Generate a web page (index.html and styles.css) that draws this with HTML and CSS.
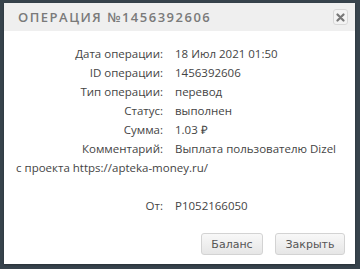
FILE: index.html
```html
<!DOCTYPE html>
<html>
<head>
<meta charset="utf-8">
<link rel="stylesheet" href="styles.css">
</head>
<body>
<div class="dialog">
  <div class="header">
    <span class="title">ОПЕРАЦИЯ №1456392606</span>
    <span class="close"><svg width="9" height="9" viewBox="0 0 9 9"><path d="M1.5 1.5 L7.5 7.5 M7.5 1.5 L1.5 7.5" stroke="#777" stroke-width="2.2" stroke-linecap="round"/></svg></span>
  </div>
  <div class="content">
    <div class="row"><span class="label">Дата операции:</span>18 Июл 2021 01:50</div>
    <div class="row"><span class="label">ID операции:</span>1456392606</div>
    <div class="row"><span class="label">Тип операции:</span>перевод</div>
    <div class="row"><span class="label">Статус:</span>выполнен</div>
    <div class="row"><span class="label">Сумма:</span>1.03 ₽</div>
    <div class="row"><span class="label">Комментарий:</span>Выплата пользователю Dizel</div>
    <div class="row">с проекта https://apteka-money.ru/</div>
    <div class="row empty"></div>
    <div class="row"><span class="label">От:</span>P1052166050</div>
  </div>
  <div class="footer">
    <button class="btn btn-balance">Баланс</button>
    <button class="btn btn-close">Закрыть</button>
  </div>
</div>
</body>
</html>
```
FILE: styles.css
```css
html, body {
  margin: 0;
  padding: 0;
  background: #37434c;
  width: 360px;
  height: 269px;
  overflow: hidden;
}
.dialog {
  margin: 3px 0 0 4px;
  width: 351px;
  height: 261px;
  background: #fff;
  display: flex;
  flex-direction: column;
  box-shadow: 0 1px 2px rgba(0,0,0,0.3);
  font-family: "Open Sans", sans-serif;
}
.header {
  height: 28px;
  background: #efefef;
  display: flex;
  align-items: center;
  justify-content: space-between;
  padding: 0 7px 0 14px;
}
.title {
  font-size: 13px;
  font-weight: 600;
  letter-spacing: 1.5px;
  color: #7a7a7a;
}
.close {
  width: 13px;
  height: 14px;
  border: 1px solid #d8d8d8;
  border-radius: 3px;
  background: #f3f3f3;
  display: flex;
  align-items: center;
  justify-content: center;
}
.content {
  padding: 13px 12px 0 12px;
  font-size: 11.5px;
  line-height: 19px;
  color: #444;
  flex: 1;
}
.row.empty {
  height: 19px;
}
.label {
  display: inline-block;
  width: 147px;
  text-align: right;
  margin-right: 12px;
}
.footer {
  display: flex;
  justify-content: flex-end;
  gap: 12px;
  padding: 0 10px 9px 0;
}
.btn {
  height: 22px;
  padding: 0;
  border: 1px solid #d3d3d3;
  border-radius: 3px;
  background: linear-gradient(#f8f8f8, #e6e6e6);
  font-family: "DejaVu Sans", Verdana, sans-serif;
  font-size: 11px;
  color: #555;
}
.btn-balance { width: 62px; }
.btn-close { width: 70px; }
```
